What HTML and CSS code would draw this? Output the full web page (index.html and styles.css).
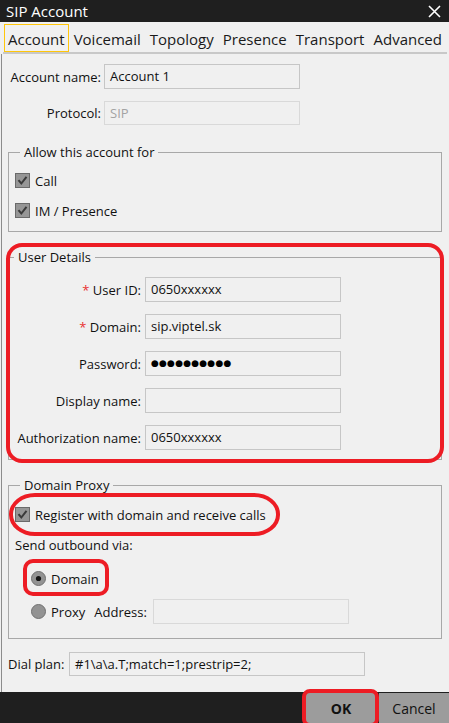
FILE: index.html
```html
<!DOCTYPE html>
<html lang="en">
<head>
<meta charset="utf-8">
<title>SIP Account</title>
<link rel="stylesheet" href="styles.css">
</head>
<body>
<div class="window">
  <header class="titlebar">
    <span class="title">SIP Account</span>
    <svg class="close" width="13" height="13" viewBox="0 0 13 13"><path d="M1 1 L12 12 M12 1 L1 12" stroke="#ffffff" stroke-width="1.6" fill="none"/></svg>
  </header>
  <nav class="tabs">
    <span class="tab active">Account</span>
    <span class="tab">Voicemail</span>
    <span class="tab">Topology</span>
    <span class="tab">Presence</span>
    <span class="tab">Transport</span>
    <span class="tab">Advanced</span>
  </nav>
  <main class="body">
    <div class="row acc">
      <span class="lbl">Account name:</span>
      <div class="field">Account 1</div>
    </div>
    <div class="row acc second">
      <span class="lbl">Protocol:</span>
      <div class="field disabled">SIP</div>
    </div>

    <section class="group allow">
      <div class="legend">Allow this account for</div>
      <div class="check first">
        <svg class="box" width="15" height="15" viewBox="0 0 15 15"><rect x="0.5" y="0.5" width="14" height="14" fill="#969696" stroke="#6a6a6a"/><path d="M3.5 7.2 L6.3 10.5 L11.5 3.8" stroke="#3a3a3a" stroke-width="2" fill="none"/></svg>
        <span>Call</span>
      </div>
      <div class="check next">
        <svg class="box" width="15" height="15" viewBox="0 0 15 15"><rect x="0.5" y="0.5" width="14" height="14" fill="#969696" stroke="#6a6a6a"/><path d="M3.5 7.2 L6.3 10.5 L11.5 3.8" stroke="#3a3a3a" stroke-width="2" fill="none"/></svg>
        <span>IM / Presence</span>
      </div>
    </section>

    <section class="group user">
      <div class="legend">User Details</div>
      <div class="row frow first">
        <span class="lbl"><span class="req">*</span> User ID:</span>
        <div class="field">0650xxxxxx</div>
      </div>
      <div class="row frow">
        <span class="lbl"><span class="req">*</span> Domain:</span>
        <div class="field">sip.viptel.sk</div>
      </div>
      <div class="row frow">
        <span class="lbl">Password:</span>
        <div class="field dots">●●●●●●●●●●</div>
      </div>
      <div class="row frow">
        <span class="lbl">Display name:</span>
        <div class="field"></div>
      </div>
      <div class="row frow">
        <span class="lbl">Authorization name:</span>
        <div class="field">0650xxxxxx</div>
      </div>
    </section>

    <section class="group proxy">
      <div class="legend">Domain Proxy</div>
      <div class="check reg">
        <svg class="box" width="15" height="15" viewBox="0 0 15 15"><rect x="0.5" y="0.5" width="14" height="14" fill="#969696" stroke="#6a6a6a"/><path d="M3.5 7.2 L6.3 10.5 L11.5 3.8" stroke="#3a3a3a" stroke-width="2" fill="none"/></svg>
        <span>Register with domain and receive calls</span>
      </div>
      <div class="send">Send outbound via:</div>
      <div class="radio r-domain">
        <svg width="15" height="15" viewBox="0 0 15 15"><circle cx="7.5" cy="7.5" r="7" fill="#939393" stroke="#707070"/><circle cx="7.5" cy="7.5" r="2.6" fill="#141414"/></svg>
        <span>Domain</span>
      </div>
      <div class="radio r-proxy">
        <svg width="15" height="15" viewBox="0 0 15 15"><circle cx="7.5" cy="7.5" r="7" fill="#939393" stroke="#707070"/></svg>
        <span>Proxy</span>
        <span class="addr">Address:</span>
        <div class="field disabled"></div>
      </div>
    </section>

    <div class="row dial">
      <span class="dlbl">Dial plan:</span>
      <div class="field wide">#1\a\a.T;match=1;prestrip=2;</div>
    </div>
  </main>
  <footer class="footer">
    <button class="btn ok">OK</button>
    <button class="btn">Cancel</button>
  </footer>

  <div class="mark m-user"></div>
  <div class="mark m-reg"></div>
  <div class="mark m-domain"></div>
  <div class="mark m-ok"></div>
</div>
</body>
</html>
```

FILE: styles.css
```css
* { box-sizing: border-box; }
html, body { margin: 0; padding: 0; }
body {
  background: #f0f0f0;
  font-family: "Open Sans", "Noto Sans", sans-serif;
  font-size: 13px;
  color: #111;
}
.window {
  position: relative;
  width: 449px;
  height: 723px;
  display: flex;
  flex-direction: column;
  overflow: hidden;
  background: #f0f0f0;
}
.titlebar {
  height: 22px;
  flex: none;
  background: #1f1f1f;
  color: #fff;
  display: flex;
  align-items: center;
  justify-content: space-between;
  padding: 0 8px 0 6px;
  font-size: 15px;
}
.close { display: block; }
.tabs {
  height: 32px;
  flex: none;
  display: flex;
  gap: 1px;
  margin: 0 2px 0 3px;
  padding: 2px 0 0 1px;
  border-bottom: 2px solid #c8c8c8;
  font-size: 15px;
}
.tab {
  height: 28px;
  padding: 1px 3px 0 3px;
  border: 1px solid transparent;
  line-height: 26px;
  color: #1a1a1a;
}
.tab.active { border-color: #ffc60a; }
.body {
  flex: 1;
  border-left: 1px solid #8c8c8c;
  margin-left: 1px;
  padding: 10px 7px 0 6px;
}
.row { display: flex; align-items: center; }
.lbl { text-align: right; white-space: nowrap; }
.acc .lbl { width: 93px; margin-right: 3px; }
.acc.second { margin-top: 12px; }
.acc.second .field { height: 24px; }
.field {
  width: 196px;
  height: 25px;
  border: 1px solid #c6c6c6;
  padding: 0 5px;
  line-height: 23px;
  white-space: nowrap;
  overflow: hidden;
}
.field.disabled { border-color: #d9d9d9; color: #a3a3a3; }
.field.dots {
  font-family: "DejaVu Sans", sans-serif;
  font-size: 9px;
  letter-spacing: 0.2px;
  color: #000;
}
.group {
  border: 1px solid #a8a8a8;
  margin-top: 25px;
}
.legend {
  width: max-content;
  margin: -10px 0 0 5px;
  padding: 0 4px;
  background: #f0f0f0;
  line-height: 18px;
}
.allow { margin-top: 27px; padding: 0 0 13px 6px; }
.check { display: flex; align-items: center; gap: 5px; height: 15px; }
.check .box { flex: none; }
.check.first { margin-top: 12px; }
.check.next { margin-top: 15px; }
.user { padding: 0 0 9px 0; }
.frow { margin-top: 12px; }
.frow.first { margin-top: 11px; }
.frow .lbl { width: 132px; margin-right: 4px; }
.req { color: #e8312f; }
.proxy { padding: 0 0 14px 6px; }
.check.reg { margin-top: 13px; }
.send { margin-top: 14px; line-height: 18px; }
.radio { display: flex; align-items: center; gap: 5px; padding-left: 16px; }
.radio svg { flex: none; display: block; }
.r-domain { margin-top: 17px; height: 15px; }
.r-proxy { margin-top: 13px; height: 25px; }
.addr { margin-left: 4px; margin-right: 1px; }
.dial { margin-top: 13px; }
.dlbl { width: 61px; }
.field.wide { width: 296px; height: 24px; }
.footer {
  height: 31px;
  flex: none;
  background: #1f1f1f;
  display: flex;
  justify-content: flex-end;
  gap: 3px;
  padding-top: 1px;
}
.btn {
  width: 70px;
  height: 30px;
  border: none;
  background: #9c9c9c;
  color: #111;
  font-family: "Open Sans", "Noto Sans", sans-serif;
  font-size: 14px;
  padding: 0;
}
.btn.ok { font-weight: bold; }
.mark {
  position: absolute;
  border: 4px solid #ed1c24;
  pointer-events: none;
}
.m-user { left: 6px; top: 243px; width: 438px; height: 220px; border-radius: 16px; }
.m-reg { left: 9px; top: 493px; width: 271px; height: 43px; border-radius: 26px / 21px; }
.m-domain { left: 23px; top: 559px; width: 86px; height: 37px; border-radius: 10px; }
.m-ok { left: 302px; top: 689px; width: 77px; height: 38px; border-radius: 8px; }
```
